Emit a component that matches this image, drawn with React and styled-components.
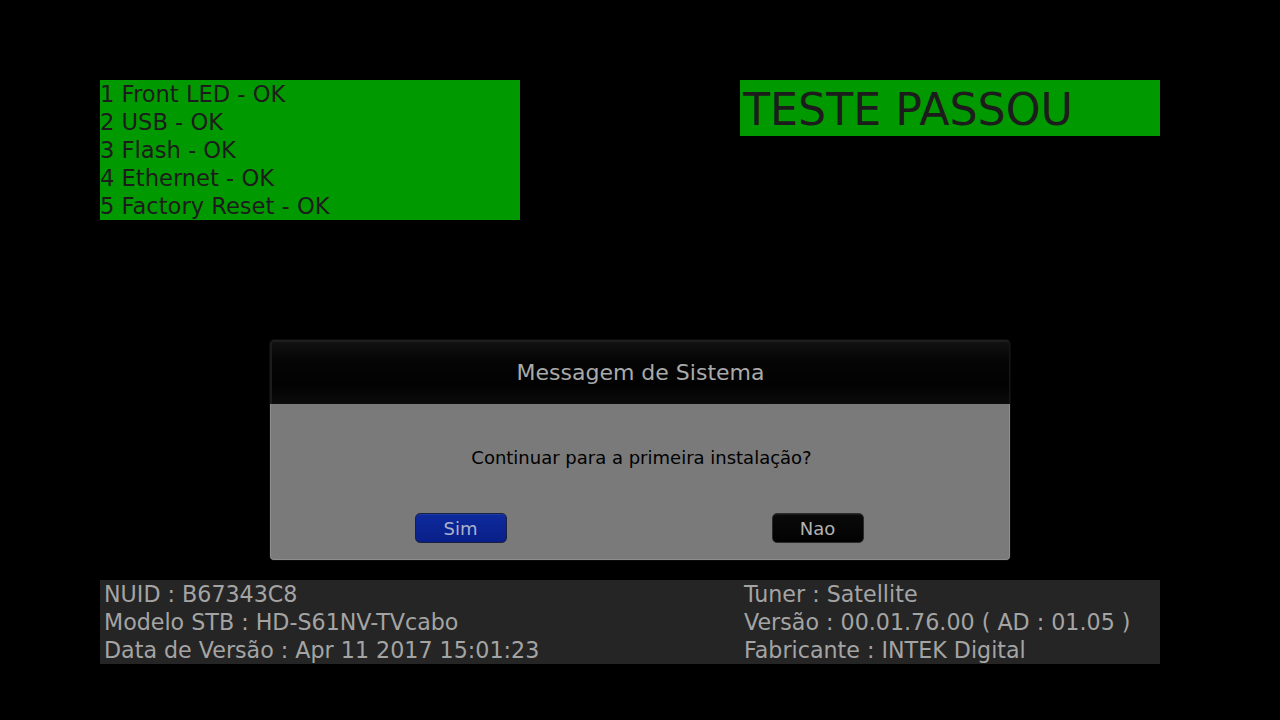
import React from "react";
import styled, { createGlobalStyle } from "styled-components";

const Global = createGlobalStyle`
  html, body { margin: 0; padding: 0; background: #000; }
  body { font-family: "DejaVu Sans", Verdana, sans-serif; }
`;

const Screen = styled.div`
  width: 1280px;
  height: 720px;
  background: #000;
  padding: 80px 120px 0 100px;
  box-sizing: border-box;
  display: flex;
  flex-direction: column;
`;

const TopRow = styled.div`
  display: flex;
  justify-content: space-between;
  align-items: flex-start;
  height: 140px;
`;

const GreenBox = styled.div`
  width: 420px;
  background: #009a00;
  color: #1c1c1c;
  box-sizing: border-box;
`;

const ResultLine = styled.div`
  font-size: 22.6px;
  line-height: 28px;
  height: 28px;
  white-space: nowrap;
`;

const Verdict = styled(GreenBox)`
  height: 56px;
  font-size: 44.3px;
  line-height: 53px;
  padding: 3px 0 0 3px;
  white-space: nowrap;
`;

const Dialog = styled.div`
  align-self: center;
  margin: 120px 0 0 20px;
  width: 740px;
  display: flex;
  flex-direction: column;
  border-radius: 4px;
  box-shadow: 0 0 0 1px #0c0c0c;
`;

const DialogHeader = styled.div`
  height: 64px;
  box-sizing: border-box;
  border-radius: 4px 4px 0 0;
  border-top: 2px solid #1e1e1e;
  border-left: 2px solid #1c1c1c;
  border-right: 1px solid #161616;
  background: linear-gradient(#111 0%, #050505 30%, #020202 70%, #0c0c0c 100%);
  color: #aaaaaa;
  font-size: 22px;
  display: flex;
  align-items: center;
  justify-content: center;
  padding-bottom: 1px;
`;

const DialogBody = styled.div`
  height: 156px;
  box-sizing: border-box;
  background: #7a7a7a;
  border: 1px solid #8e8e8e;
  border-top: none;
  border-radius: 0 0 4px 4px;
  padding-top: 44px;
  display: flex;
  flex-direction: column;
  align-items: center;
`;

const Message = styled.div`
  color: #000;
  font-size: 18px;
  line-height: 20px;
  margin-left: 3px;
`;

const ButtonRow = styled.div`
  margin: 45px 0 0 -2px;
  display: flex;
  gap: 265px;
`;

const Button = styled.div`
  width: 92px;
  height: 30px;
  box-sizing: border-box;
  border-radius: 5px;
  border: 1px solid ${(p) => (p.$primary ? "#1a2040" : "#2a2a2a")};
  background: ${(p) =>
    p.$primary
      ? "linear-gradient(#0d2a9c, #0a1f88)"
      : "linear-gradient(#0a0a0a, #020202)"};
  box-shadow: inset 0 1px 0 ${(p) => (p.$primary ? "#1a3aa8" : "#1a1a1a")};
  color: ${(p) => (p.$primary ? "#aab2cc" : "#b2b2b2")};
  font-size: 18px;
  display: flex;
  align-items: center;
  justify-content: center;
`;

const InfoBar = styled.div`
  margin-top: 20px;
  width: 1060px;
  height: 84px;
  background: #252525;
  display: flex;
  color: #a4a4a4;
`;

const InfoColumn = styled.div`
  width: ${(p) => p.$width}px;
  padding-left: 4px;
  box-sizing: border-box;
`;

const InfoLine = styled.div`
  font-size: 22.2px;
  line-height: 28px;
  height: 28px;
  white-space: nowrap;
`;

export default function App() {
  const results = [
    "1 Front LED - OK",
    "2 USB - OK",
    "3 Flash - OK",
    "4 Ethernet - OK",
    "5 Factory Reset - OK",
  ];
  return (
    <>
      <Global />
      <Screen>
        <TopRow>
          <GreenBox>
            {results.map((r) => (
              <ResultLine key={r}>{r}</ResultLine>
            ))}
          </GreenBox>
          <Verdict>TESTE PASSOU</Verdict>
        </TopRow>
        <Dialog>
          <DialogHeader>Messagem de Sistema</DialogHeader>
          <DialogBody>
            <Message>Continuar para a primeira instalação?</Message>
            <ButtonRow>
              <Button $primary>Sim</Button>
              <Button>Nao</Button>
            </ButtonRow>
          </DialogBody>
        </Dialog>
        <InfoBar>
          <InfoColumn $width={640}>
            <InfoLine>NUID : B67343C8</InfoLine>
            <InfoLine>Modelo STB : HD-S61NV-TVcabo</InfoLine>
            <InfoLine>Data de Versão : Apr 11 2017 15:01:23</InfoLine>
          </InfoColumn>
          <InfoColumn $width={420}>
            <InfoLine>Tuner : Satellite</InfoLine>
            <InfoLine>Versão : 00.01.76.00 ( AD : 01.05 )</InfoLine>
            <InfoLine>Fabricante : INTEK Digital</InfoLine>
          </InfoColumn>
        </InfoBar>
      </Screen>
    </>
  );
}
